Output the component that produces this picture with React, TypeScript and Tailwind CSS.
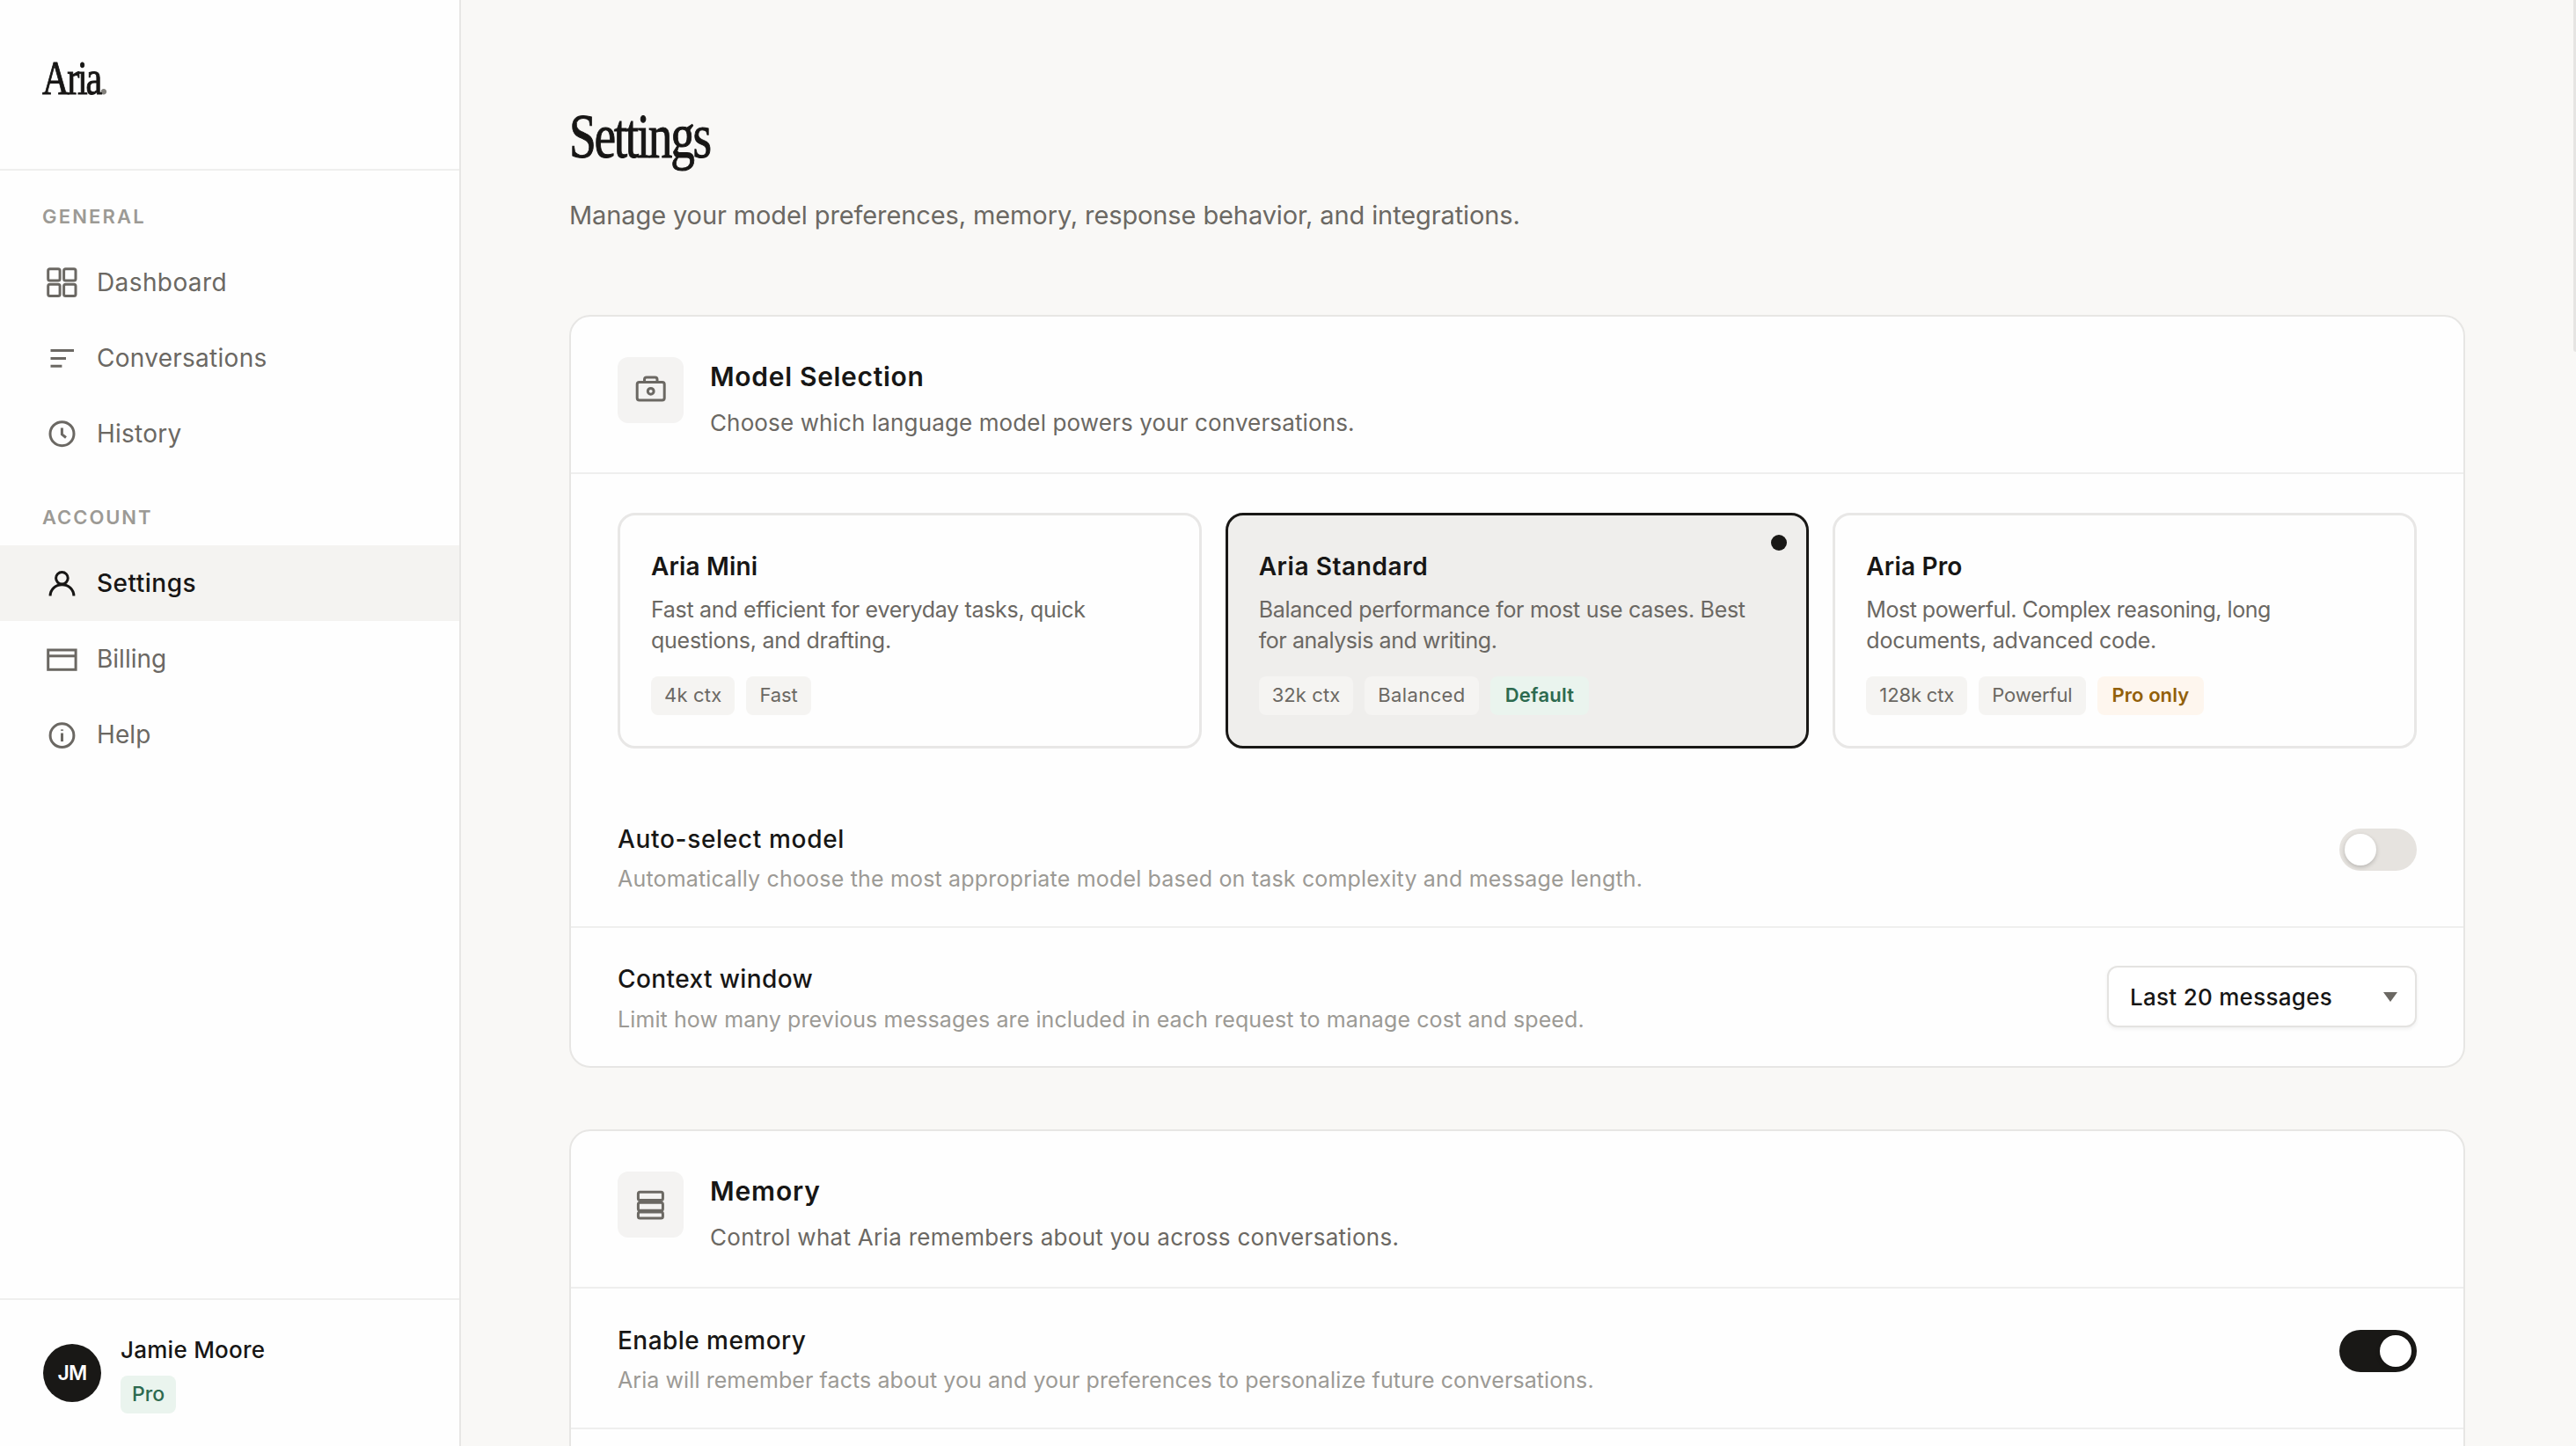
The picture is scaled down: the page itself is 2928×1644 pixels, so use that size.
import { useState } from "react";
import type { ReactNode } from "react";

type NavItem = { label: string; tracking: string; icon: ReactNode };

const general: NavItem[] = [
  {
    label: "Dashboard",
    tracking: "tracking-[0.4px]",
    icon: (
      <>
        <rect x="6.7" y="6.7" width="13.4" height="13.4" rx="2" />
        <rect x="24.6" y="6.7" width="13.4" height="13.4" rx="2" />
        <rect x="6.7" y="24.2" width="13.4" height="13.4" rx="2" />
        <rect x="24.6" y="24.2" width="13.4" height="13.4" rx="2" />
      </>
    ),
  },
  {
    label: "Conversations",
    tracking: "tracking-[0.27px]",
    icon: <path d="M9.5 13.4H36M9.5 22.4H27M9.5 31.3H22.4" />,
  },
  {
    label: "History",
    tracking: "tracking-[0.25px]",
    icon: (
      <>
        <circle cx="22.5" cy="22.2" r="13.5" />
        <path d="M22.4 15.6V22.8L27 26.5" />
      </>
    ),
  },
];

const account: NavItem[] = [
  {
    label: "Settings",
    tracking: "tracking-[0.5px]",
    icon: (
      <>
        <circle cx="22.4" cy="16.3" r="6.8" />
        <path d="M9.1 36.5A13.4 12.8 0 0 1 35.9 36.5" />
      </>
    ),
  },
  {
    label: "Billing",
    tracking: "tracking-[0px]",
    icon: (
      <>
        <rect x="6.7" y="12" width="31.4" height="22.3" />
        <path d="M6.7 18.8H38" />
      </>
    ),
  },
  {
    label: "Help",
    tracking: "tracking-[0.1px]",
    icon: (
      <>
        <circle cx="22.5" cy="23.2" r="13.4" />
        <path d="M22.5 20.5V30" />
        <path d="M21 17.1H24" strokeWidth="1.4" />
      </>
    ),
  },
];

const models = [
  {
    name: "Aria Mini",
    nameTracking: "tracking-[0.16px]",
    lines: [
      { text: "Fast and efficient for everyday tasks, quick", tracking: "tracking-[-0.31px]" },
      { text: "questions, and drafting.", tracking: "tracking-[-0.26px]" },
    ],
    tags: [
      { text: "4k ctx", tracking: "tracking-[0.2px]" },
      { text: "Fast", tracking: "tracking-[-0.1px]" },
    ],
  },
  {
    name: "Aria Standard",
    nameTracking: "tracking-[0.57px]",
    lines: [
      { text: "Balanced performance for most use cases. Best", tracking: "tracking-[-0.31px]" },
      { text: "for analysis and writing.", tracking: "tracking-[-0.43px]" },
    ],
    tags: [
      { text: "32k ctx", tracking: "tracking-[0.09px]" },
      { text: "Balanced", tracking: "tracking-[0.38px]" },
    ],
    badge: { text: "Default", style: "bg-[#eaf4ee] text-[#2d6a4f] tracking-[0.23px]" },
  },
  {
    name: "Aria Pro",
    nameTracking: "tracking-[0.17px]",
    lines: [
      { text: "Most powerful. Complex reasoning, long", tracking: "tracking-[-0.49px]" },
      { text: "documents, advanced code.", tracking: "tracking-[-0.24px]" },
    ],
    tags: [
      { text: "128k ctx", tracking: "tracking-[-0.14px]" },
      { text: "Powerful", tracking: "tracking-[-0.12px]" },
    ],
    badge: { text: "Pro only", style: "bg-[#fef6ee] text-[#92600a] tracking-[0.06px]" },
  },
];

function NavGroup({ title, tracking, items, active, onSelect }: {
  title: string;
  tracking: string;
  items: NavItem[];
  active: string;
  onSelect: (label: string) => void;
}) {
  return (
    <div>
      <div className={`px-12 pt-9 pb-4 text-[22px] leading-8 font-semibold text-[#9c9a95] ${tracking}`}>{title}</div>
      {items.map((item) => (
        <button
          key={item.label}
          onClick={() => onSelect(item.label)}
          className={`flex h-[86px] w-full items-center gap-[17px] px-12 text-[28px] ${
            active === item.label ? "bg-[#f4f3f1] font-medium text-[#171615]" : "text-[#6b6863]"
          }`}
        >
          <svg viewBox="0 0 45 45" className="size-[45px] shrink-0" fill="none" stroke="currentColor" strokeWidth="3">
            {item.icon}
          </svg>
          <span className={item.tracking}>{item.label}</span>
        </button>
      ))}
    </div>
  );
}

function Card({ icon, title, titleTracking, text, textTracking, children }: {
  icon: ReactNode;
  title: string;
  titleTracking: string;
  text: string;
  textTracking: string;
  children: ReactNode;
}) {
  return (
    <section className="mb-[70px] overflow-hidden rounded-3xl border-2 border-[#e7e6e4] bg-[#fefefe]">
      <div className="flex h-[179px] gap-[30px] border-b-2 border-[#efefee] px-[53px] pt-[46px]">
        <div className="flex size-[75px] shrink-0 items-center justify-center rounded-xl bg-[#f4f3f2]">
          <svg viewBox="0 0 45 45" className="size-[45px]" fill="none" stroke="#6b6863" strokeWidth="3">
            {icon}
          </svg>
        </div>
        <div>
          <h2 className={`text-[30px] leading-[44px] font-semibold text-[#171615] ${titleTracking}`}>{title}</h2>
          <p className={`mt-[13px] text-[26px] leading-9 text-[#6b6863] ${textTracking}`}>{text}</p>
        </div>
      </div>
      {children}
    </section>
  );
}

function Row({ title, titleTracking, text, textTracking, last, children }: {
  title: string;
  titleTracking: string;
  text: string;
  textTracking: string;
  last?: boolean;
  children: ReactNode;
}) {
  return (
    <div className={`flex items-start justify-between px-[53px] ${last ? "h-[157px]" : "h-40 border-b-2 border-[#efefee]"}`}>
      <div className={last ? "pt-[38px]" : "pt-[39px]"}>
        <div className={`text-[28px] leading-10 font-medium text-[#171615] ${titleTracking}`}>{title}</div>
        <div className={`text-[25px] leading-[35px] text-[#9c9a95] ${last ? "mt-[9px]" : "mt-2"} ${textTracking}`}>{text}</div>
      </div>
      {children}
    </div>
  );
}

function Toggle({ on, onChange }: { on: boolean; onChange: (v: boolean) => void }) {
  return (
    <button
      onClick={() => onChange(!on)}
      className={`mt-[47px] flex h-12 w-[88px] items-center rounded-full px-1.5 ${
        on ? "justify-end bg-[#191816]" : "justify-start bg-[#e6e3df]"
      }`}
    >
      <span className="size-9 rounded-full bg-white shadow-[0_2px_5px_rgba(0,0,0,0.2)]" />
    </button>
  );
}

export default function App() {
  const [page, setPage] = useState("Settings");
  const [model, setModel] = useState("Aria Standard");
  const [autoSelect, setAutoSelect] = useState(false);
  const [memory, setMemory] = useState(true);

  return (
    <div className="relative flex h-screen w-screen overflow-hidden bg-[#f9f8f6] font-['Inter',sans-serif]">
      <aside className="flex w-[524px] shrink-0 flex-col border-r-2 border-[#e7e6e4] bg-[#fefefe]">
        <div className="flex h-[194px] border-b-2 border-[#efefee] pt-[61px] pl-12 font-['Liberation_Serif',serif] text-[55px] leading-[56px] text-[#171615]">
          <span className="w-[63px] origin-left scale-x-[0.77] tracking-[-3px] [-webkit-text-stroke:1px_#171615]">Aria</span>
          <span className="text-[#82807c]">.</span>
        </div>

        <nav className="flex-1">
          <NavGroup title="GENERAL" tracking="tracking-[2.17px]" items={general} active={page} onSelect={setPage} />
          <NavGroup title="ACCOUNT" tracking="tracking-[1.94px]" items={account} active={page} onSelect={setPage} />
        </nav>

        <div className="flex h-[168px] items-center gap-[22px] border-t-2 border-[#efefee] pl-[49px]">
          <div className="flex size-[66px] items-center justify-center rounded-full bg-[#191816] text-[23px] font-semibold tracking-[-0.8px] text-white">
            JM
          </div>
          <div className="pt-px">
            <div className="text-[26px] leading-9 font-medium tracking-[0.26px] text-[#171615]">Jamie Moore</div>
            <span className="mt-[11px] flex h-[43px] w-[63px] items-center justify-center rounded-lg bg-[#eaf4ee] text-[23px] font-medium text-[#2d6a4f]">
              Pro
            </span>
          </div>
        </div>
      </aside>

      <main className="min-w-0 flex-1 pt-[113px] pr-[126px] pl-[123px]">
        <h1 className="w-fit origin-left scale-x-[0.78] font-['Liberation_Serif',serif] text-[71px] leading-[84px] tracking-[-3px] text-[#171615] [-webkit-text-stroke:1px_#171615]">
          Settings
        </h1>
        <p className="mt-7 mb-[93px] text-[29px] leading-10 tracking-[-0.11px] text-[#6b6863]">
          Manage your model preferences, memory, response behavior, and integrations.
        </p>

        <Card
          title="Model Selection"
          titleTracking="tracking-[0.69px]"
          text="Choose which language model powers your conversations."
          textTracking="tracking-[0.13px]"
          icon={
            <>
              <rect x="7.2" y="13.5" width="31" height="20.5" rx="2.5" />
              <path d="M15.5 13.5V10.5Q15.5 8 18 8H27.5Q30 8 30 10.5V13.5" />
              <circle cx="22.7" cy="23.8" r="3.4" />
            </>
          }
        >
          <div className="grid grid-cols-3 gap-[27px] px-[53px] py-11">
            {models.map((m) => (
              <div
                key={m.name}
                onClick={() => setModel(m.name)}
                className={`relative h-[268px] rounded-[20px] border-[3px] px-[35px] pt-[38px] ${
                  model === m.name ? "border-[#191816] bg-[#efeeec]" : "border-[#e8e7e6]"
                }`}
              >
                {model === m.name && <span className="absolute top-[22px] right-[22px] size-[18px] rounded-full bg-[#191816]" />}
                <h3 className={`text-[28px] leading-10 font-semibold text-[#171615] ${m.nameTracking}`}>{m.name}</h3>
                <p className="mt-3 text-[25px] leading-[35px] text-[#6b6863]">
                  {m.lines.map((line) => (
                    <span key={line.text} className={`block whitespace-nowrap ${line.tracking}`}>{line.text}</span>
                  ))}
                </p>
                <div className="mt-[23px] flex gap-[13px] text-[22px]">
                  {m.tags.map((tag) => (
                    <span key={tag.text} className={`flex h-11 items-center rounded-lg bg-[#f5f4f2] px-[15px] pb-0.5 text-[#6b6863] ${tag.tracking}`}>
                      {tag.text}
                    </span>
                  ))}
                  {m.badge && (
                    <span className={`flex h-11 items-center rounded-lg px-[17px] pb-0.5 font-semibold ${m.badge.style}`}>{m.badge.text}</span>
                  )}
                </div>
              </div>
            ))}
          </div>

          <Row
            title="Auto-select model"
            titleTracking="tracking-[0.67px]"
            text="Automatically choose the most appropriate model based on task complexity and message length."
            textTracking="tracking-[0.18px]"
          >
            <Toggle on={autoSelect} onChange={setAutoSelect} />
          </Row>
          <Row
            last
            title="Context window"
            titleTracking="tracking-[0.4px]"
            text="Limit how many previous messages are included in each request to manage cost and speed."
            textTracking="tracking-[0.1px]"
          >
            <button className="mt-[43px] flex h-[70px] w-[352px] items-center justify-between rounded-xl border-2 border-[#e4e3e1] bg-white pr-5 pl-6 text-[26px] font-medium tracking-[0.28px] text-[#171615] shadow-[0_2px_4px_rgba(0,0,0,0.06)]">
              Last 20 messages
              <svg viewBox="0 0 16 11" className="h-[11px] w-4" fill="#6b6863">
                <path d="M0 0H16L8 11Z" />
              </svg>
            </button>
          </Row>
        </Card>

        <Card
          title="Memory"
          titleTracking="tracking-[0.85px]"
          text="Control what Aria remembers about you across conversations."
          textTracking="tracking-[0.29px]"
          icon={
            <>
              <rect x="8.4" y="8.3" width="28" height="9.2" rx="2" />
              <rect x="8.4" y="20.3" width="28" height="9" rx="2" />
              <rect x="8.4" y="31" width="28" height="7" rx="2" />
            </>
          }
        >
          <Row
            title="Enable memory"
            titleTracking="tracking-[0.46px]"
            text="Aria will remember facts about you and your preferences to personalize future conversations."
            textTracking="tracking-[0.08px]"
          >
            <Toggle on={memory} onChange={setMemory} />
          </Row>
          <div className="h-40" />
        </Card>
      </main>

      {/* scrollbar thumb */}
      <div className="absolute top-0 right-0 h-[400px] w-[3px] rounded-bl-sm bg-[#e6e5e3]" />
    </div>
  );
}
